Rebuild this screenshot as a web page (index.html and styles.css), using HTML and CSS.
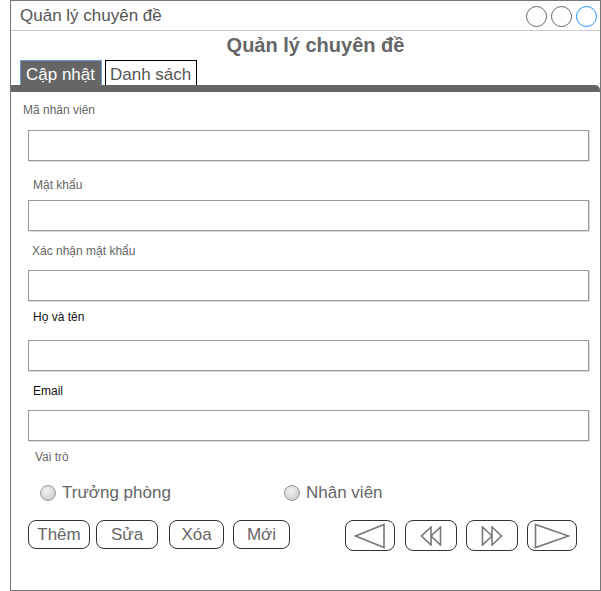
FILE: index.html
```html
<!DOCTYPE html>
<html lang="vi">
<head>
<meta charset="utf-8">
<title>Quản lý chuyên đề</title>
<link rel="stylesheet" href="styles.css">
</head>
<body>
<div class="window">
  <div class="titlebar">
    <span class="title-text">Quản lý chuyên đề</span>
    <div class="win-controls">
      <span class="ctl"></span>
      <span class="ctl"></span>
      <span class="ctl ctl-active"></span>
    </div>
  </div>
  <h1 class="heading">Quản lý chuyên đề</h1>
  <div class="tabs">
    <div class="tab tab-active">Cập nhật</div>
    <div class="tab">Danh sách</div>
  </div>
  <div class="tabbar"></div>
  <form class="form">
    <div class="label l1">Mã nhân viên</div>
    <div class="input i1"></div>
    <div class="label l2">Mật khẩu</div>
    <div class="input i2"></div>
    <div class="label l3">Xác nhận mật khẩu</div>
    <div class="input i3"></div>
    <div class="label l4 dark">Họ và tên</div>
    <div class="input i4"></div>
    <div class="label l5 dark">Email</div>
    <div class="input i5"></div>
    <div class="label l6">Vai trò</div>
    <div class="radios">
      <label class="radio r1"><span class="dot"></span>Trưởng phòng</label>
      <label class="radio r2"><span class="dot"></span>Nhân viên</label>
    </div>
    <div class="buttons">
      <button type="button" class="btn b-them">Thêm</button>
      <button type="button" class="btn b-sua">Sửa</button>
      <button type="button" class="btn b-xoa">Xóa</button>
      <button type="button" class="btn b-moi">Mới</button>
      <button type="button" class="btn nav n1" aria-label="Trước">
        <svg width="32" height="26" viewBox="0 0 32 26"><path d="M1.5 13 L30 1.5 L30 24.5 Z" fill="none" stroke="#777" stroke-width="1.6" stroke-linejoin="miter"/></svg>
      </button>
      <button type="button" class="btn nav n2" aria-label="Đầu">
        <svg width="22" height="20" viewBox="0 0 22 20"><path d="M11 1 L1.5 10 L11 19 Z M20.5 1 L11 10 L20.5 19 Z" fill="none" stroke="#777" stroke-width="1.6"/></svg>
      </button>
      <button type="button" class="btn nav n3" aria-label="Cuối">
        <svg width="22" height="20" viewBox="0 0 22 20"><path d="M1.5 1 L11 10 L1.5 19 Z M11 1 L20.5 10 L11 19 Z" fill="none" stroke="#777" stroke-width="1.6"/></svg>
      </button>
      <button type="button" class="btn nav n4" aria-label="Sau">
        <svg width="36" height="26" viewBox="0 0 36 26"><path d="M1.5 1.5 L34.5 13 L1.5 24.5 Z" fill="none" stroke="#777" stroke-width="1.6"/></svg>
      </button>
    </div>
  </form>
</div>
</body>
</html>
```

FILE: styles.css
```css
html, body {
  margin: 0;
  padding: 0;
  background: #fff;
}
body {
  font-family: "Liberation Sans", Arial, sans-serif;
  color: #666;
}
.window {
  box-sizing: border-box;
  width: 591px;
  height: 591px;
  margin-left: 10px;
  border: 1px solid #777;
  display: flex;
  flex-direction: column;
}
.titlebar {
  height: 29px;
  border-bottom: 1px solid #ccc;
  display: flex;
  align-items: center;
  justify-content: space-between;
  padding: 0 3px 0 9px;
}
.title-text {
  font-size: 17px;
  color: #555;
  margin-top: 1px;
}
.win-controls {
  display: flex;
  gap: 4px;
  margin-top: 1px;
}
.ctl {
  box-sizing: border-box;
  width: 21px;
  height: 21px;
  border-radius: 50%;
  border: 1px solid #666;
}
.ctl-active {
  border-color: #1e90ff;
}
.heading {
  margin: 2px 0 0 0;
  height: 25px;
  line-height: 25px;
  font-size: 20px;
  font-weight: bold;
  color: #666;
  text-align: center;
  padding-left: 20px;
}
.tabs {
  display: flex;
  gap: 3px;
  margin: 2px 0 0 9px;
  height: 25px;
}
.tab {
  box-sizing: border-box;
  height: 25px;
  border: 1px solid #000;
  border-bottom: none;
  font-size: 17px;
  line-height: 27px;
  color: #555;
  padding: 0 4px;
  width: 92px;
  white-space: nowrap;
  flex: none;
  overflow: hidden;
}
.tab-active {
  width: 82px;
  background: #666;
  color: #fff;
  border-color: #6b9bd6;
  padding: 0 5px;
}
.tabbar {
  height: 7px;
  background: #666;
  border-top-right-radius: 5px;
}
.form {
  margin: 0;
  padding: 11px 0 0 0;
}
.label {
  font-size: 12px;
  line-height: 14px;
  height: 14px;
  color: #666;
}
.label.dark {
  color: #111;
}
.l1 { margin-left: 12px; }
.l2 { margin: 17px 0 0 22px; }
.l3 { margin: 13px 0 0 21px; }
.l4 { margin: 9px 0 0 22px; }
.l5 { margin: 13px 0 0 22px; }
.l6 { margin: 9px 0 0 24px; }
.input {
  box-sizing: border-box;
  width: 561px;
  height: 31px;
  margin-left: 17px;
  border: 1px solid #999;
  box-shadow: 1px 1px 0 #ddd;
  background: #fff;
}
.i1 { margin-top: 13px; }
.i2 { margin-top: 8px; }
.i3 { margin-top: 12px; }
.i4 { margin-top: 16px; }
.i5 { margin-top: 12px; }
.radios {
  display: flex;
  margin-top: 19px;
  height: 20px;
  align-items: center;
}
.radio {
  display: flex;
  align-items: center;
  gap: 6px;
  font-size: 17px;
  color: #666;
}
.r1 { margin-left: 29px; width: 244px; }
.dot {
  box-sizing: border-box;
  width: 16px;
  height: 16px;
  border-radius: 50%;
  border: 1px solid #999;
  background: radial-gradient(circle at 40% 35%, #f2f2f2 0%, #d6d6d6 60%, #bdbdbd 100%);
}
.buttons {
  display: flex;
  margin: 17px 0 0 17px;
  align-items: flex-start;
}
.btn {
  box-sizing: border-box;
  height: 29px;
  border: 1px solid #333;
  border-radius: 8px;
  background: #fff;
  font-family: "Liberation Sans", Arial, sans-serif;
  font-size: 17px;
  color: #666;
  padding: 0;
  display: flex;
  align-items: center;
  justify-content: center;
}
.b-them { width: 62px; margin-right: 6px; }
.b-sua { width: 62px; margin-right: 11px; }
.b-xoa { width: 55px; margin-right: 9px; }
.b-moi { width: 57px; margin-right: 55px; }
.nav { height: 31px; }
.n1 { width: 50px; margin-right: 10px; }
.n2 { width: 52px; margin-right: 9px; }
.n3 { width: 52px; margin-right: 9px; }
.n4 { width: 50px; }
.nav svg { display: block; }
```
